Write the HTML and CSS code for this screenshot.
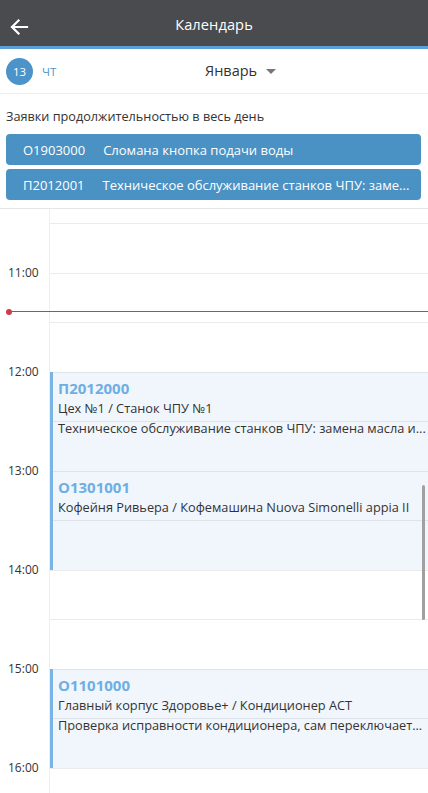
FILE: index.html
```html
<!DOCTYPE html>
<html lang="ru">
<head>
<meta charset="utf-8">
<link rel="stylesheet" href="styles.css">
</head>
<body>
<div class="app">
  <header class="topbar">
    <svg class="back" width="20" height="18" viewBox="0 0 20 18"><path d="M18 9H3M9.5 2.5L3 9l6.5 6.5" fill="none" stroke="#fff" stroke-width="2.2" stroke-linecap="square"/></svg>
    <div class="title">Календарь</div>
  </header>
  <div class="daterow">
    <div class="day"><span class="circle">13</span><span class="dow">ЧТ</span></div>
    <div class="month">Январь <span class="caret"></span></div>
  </div>
  <section class="allday">
    <div class="allday-label">Заявки продолжительностью в весь день</div>
    <div class="bar"><span class="code">О1903000</span><span class="name">Сломана кнопка подачи воды</span></div>
    <div class="bar"><span class="code">П2012001</span><span class="name">Техническое обслуживание станков ЧПУ: заме...</span></div>
  </section>
  <section class="timeline">
    <div class="times">
      <div class="spacer"></div>
      <div class="trow"></div>
      <div class="trow"><span>11:00</span></div>
      <div class="trow"></div>
      <div class="trow"><span>12:00</span></div>
      <div class="trow"></div>
      <div class="trow"><span>13:00</span></div>
      <div class="trow"></div>
      <div class="trow"><span>14:00</span></div>
      <div class="trow"></div>
      <div class="trow"><span>15:00</span></div>
      <div class="trow"></div>
      <div class="trow"><span>16:00</span></div>
    </div>
    <div class="grid">
      <div class="spacer"></div>
      <div class="row"></div><div class="row"></div><div class="row"></div><div class="row"></div>
      <div class="row"></div><div class="row"></div><div class="row"></div><div class="row"></div>
      <div class="row"></div><div class="row"></div><div class="row"></div><div class="row"></div>
      <div class="event" style="top:163px">
        <div class="ev-code">П2012000</div>
        <div class="ev-line">Цех №1 / Станок ЧПУ №1</div>
        <div class="ev-line">Техническое обслуживание станков ЧПУ: замена масла и...</div>
      </div>
      <div class="event" style="top:262px">
        <div class="ev-code">О1301001</div>
        <div class="ev-line">Кофейня Ривьера / Кофемашина Nuova Simonelli appia II</div>
      </div>
      <div class="event" style="top:460px">
        <div class="ev-code">О1101000</div>
        <div class="ev-line">Главный корпус Здоровье+ / Кондиционер АСТ</div>
        <div class="ev-line">Проверка исправности кондиционера, сам переключает...</div>
      </div>
    </div>
    <div class="now"><span class="dot"></span></div>
    <div class="scrollbar"></div>
  </section>
</div>
</body>
</html>
```

FILE: styles.css
```css
* { box-sizing: border-box; }
html, body { margin: 0; padding: 0; background: #fff; }
body {
  font-family: "Open Sans", "Liberation Sans", sans-serif;
  color: #333;
  width: 428px;
  height: 793px;
  overflow: hidden;
}
.app { display: flex; flex-direction: column; height: 793px; }

.topbar {
  height: 49px;
  flex: none;
  background: #4a4b4f;
  border-bottom: 3px solid #5b9fd6;
  display: flex;
  align-items: center;
  justify-content: center;
  position: relative;
}
.back { position: absolute; left: 9px; top: 18px; }
.title { color: #fff; font-size: 14.6px; letter-spacing: 0.1px; margin-top: 2px; }

.daterow {
  height: 45px;
  flex: none;
  border-bottom: 1px solid #ececec;
  display: flex;
  align-items: center;
  padding: 0 6px;
  position: relative;
}
.day { display: flex; align-items: center; gap: 9px; }
.circle {
  width: 27px; height: 27px; border-radius: 50%;
  background: #4b93c8; color: #fff;
  font-size: 11.5px;
  display: flex; align-items: center; justify-content: center;
}
.dow { color: #4b93c8; font-size: 11.5px; }
.month {
  position: absolute; left: 205px; top: 12px;
  font-size: 14.5px; color: #333;
  display: flex; align-items: center;
}
.caret {
  display: inline-block; margin-left: 9px; margin-top: 1px;
  width: 0; height: 0;
  border-left: 5px solid transparent; border-right: 5px solid transparent;
  border-top: 5px solid #777;
}

.allday {
  flex: none;
  padding: 13px 7px 8px 6px;
  border-bottom: 1px solid #e6e6e6;
  display: flex; flex-direction: column; gap: 4px;
}
.allday-label { font-size: 12.7px; color: #333; margin-bottom: 5px; line-height: 18px; }
.bar {
  height: 31px;
  background: #4a91c4;
  border-radius: 4px;
  color: #fff;
  font-size: 13px;
  display: flex; align-items: center;
  padding: 0 12px 0 17px;
  gap: 18px;
  white-space: nowrap;
}
.bar .code { flex: none; }

.timeline {
  flex: 1;
  display: flex;
  position: relative;
  overflow: hidden;
}
.times { width: 50px; flex: none; border-right: 1px solid #efefef; }
.spacer { height: 14px; }
.trow { height: 49.5px; display: flex; align-items: flex-start; }
.trow span {
  font-size: 12px; color: #333; padding-left: 8px;
  transform: translateY(-50%);
  line-height: 16px;
}
.grid { flex: 1; position: relative; }
.row { height: 49.5px; border-top: 1px solid #ebebeb; }

.event {
  position: absolute; left: 0; right: 0;
  height: 99px;
  background: rgba(70, 140, 210, 0.075);
  border-left: 3px solid #78b4e6;
  padding: 6px 3px 0 5px;
}
.ev-code { color: #6eafe3; font-weight: 700; font-size: 15px; line-height: 20px; }
.ev-line {
  font-size: 12.75px; line-height: 20px; color: #333;
  white-space: nowrap;
}

.now {
  position: absolute; left: 9px; right: 0; top: 102px;
  height: 1px; background: #d03a4f;
}
.dot {
  position: absolute; left: -3px; top: -2px;
  width: 6px; height: 6px; border-radius: 50%; background: #d03a4f;
}
.scrollbar {
  position: absolute; right: 3px; top: 276px;
  width: 3px; height: 135px; border-radius: 2px; background: #a0a0a0;
}
```
